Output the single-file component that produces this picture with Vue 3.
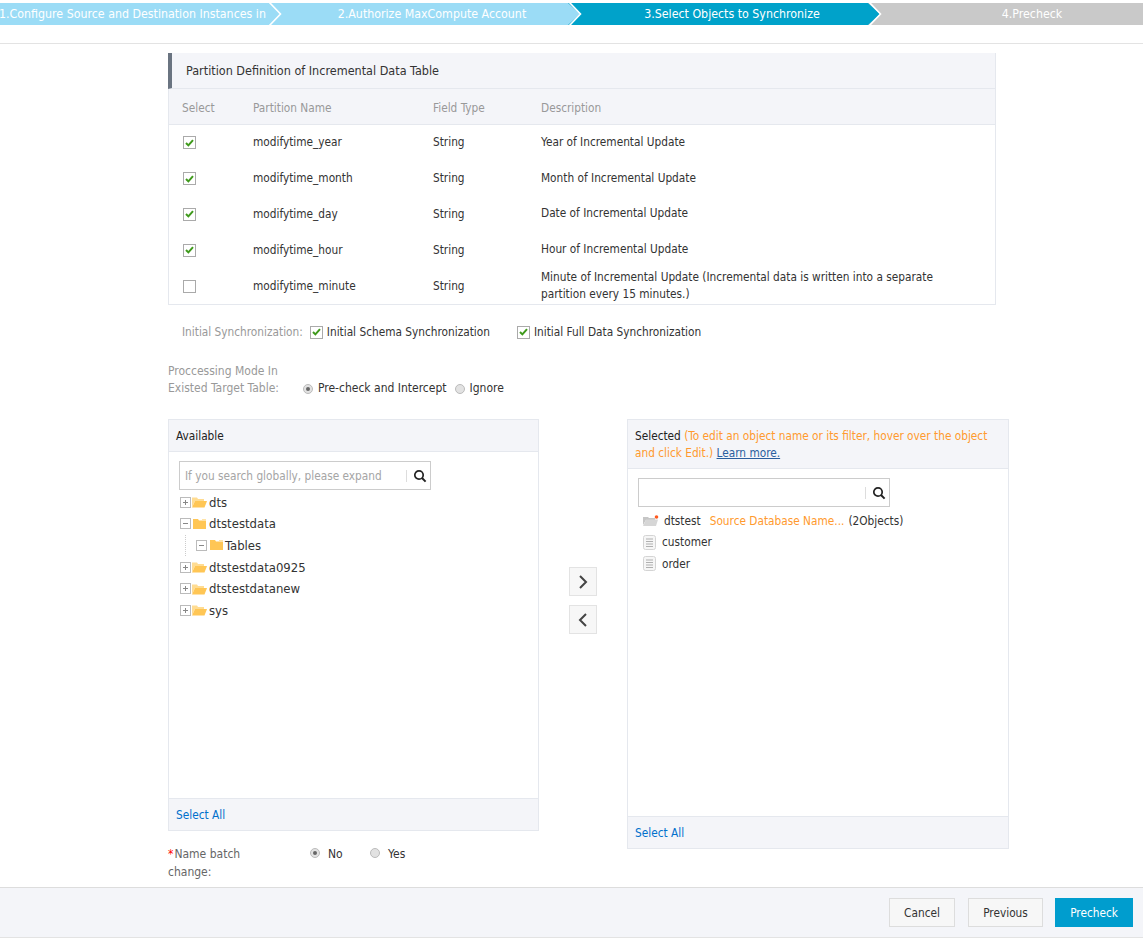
<template>
  <div class="page">
    <div class="stepper-wrap">
      <div class="stepper">
        <div v-for="s in steps" :key="s.label" class="step" :class="s.state">
          <span class="step-text">{{ s.label }}</span>
          <svg class="step-arrow" width="14" height="22" viewBox="0 0 14 22">
            <path d="M0 0 H14 V22 H0 L12 11 Z" :fill="s.next" />
            <path d="M1 -1 L12.5 11 L1 23" fill="none" stroke="#fff" stroke-width="1.6" />
          </svg>
        </div>
      </div>
    </div>

    <div class="content">
      <div class="partition">
        <div class="partition-title">Partition Definition of Incremental Data Table</div>
        <table class="partition-table">
          <thead>
            <tr>
              <th class="col-select">Select</th>
              <th class="col-name">Partition Name</th>
              <th class="col-type">Field Type</th>
              <th>Description</th>
            </tr>
          </thead>
          <tbody>
            <tr v-for="r in rows" :key="r.name">
              <td>
                <span class="checkbox" :class="{ on: r.on }">
                  <svg v-if="r.on" width="9" height="8" viewBox="0 0 9 8"><path d="M1 4 L3.4 6.4 L8 1.2" fill="none" stroke="#3f9a1c" stroke-width="2" /></svg>
                </span>
              </td>
              <td>{{ r.name }}</td>
              <td>String</td>
              <td class="desc">{{ r.desc }}</td>
            </tr>
          </tbody>
        </table>
      </div>

      <div class="init-row">
        <span class="form-label">Initial Synchronization:</span>
        <label class="check-label first">
          <span class="checkbox on"><svg width="9" height="8" viewBox="0 0 9 8"><path d="M1 4 L3.4 6.4 L8 1.2" fill="none" stroke="#3f9a1c" stroke-width="2" /></svg></span>
          Initial Schema Synchronization
        </label>
        <label class="check-label second">
          <span class="checkbox on"><svg width="9" height="8" viewBox="0 0 9 8"><path d="M1 4 L3.4 6.4 L8 1.2" fill="none" stroke="#3f9a1c" stroke-width="2" /></svg></span>
          Initial Full Data Synchronization
        </label>
      </div>

      <div class="mode-row">
        <div class="form-label mode-label">Proccessing Mode In<br />Existed Target Table:</div>
        <div class="mode-options">
          <span class="radio on"></span><span class="mode-text">Pre-check and Intercept</span>
          <span class="radio"></span><span class="mode-text">Ignore</span>
        </div>
      </div>

      <div class="transfer">
        <div class="left-col">
          <div class="panel panel-left">
            <div class="panel-head">Available</div>
            <div class="panel-body">
              <div class="search">
                <span class="search-placeholder">If you search globally, please expand</span>
                <span class="search-sep"></span>
                <svg class="search-icon" width="14" height="14" viewBox="0 0 14 14"><circle cx="6" cy="6" r="4.2" fill="none" stroke="#222" stroke-width="1.7" /><path d="M9 9 L12.6 12.6" stroke="#222" stroke-width="2" /></svg>
              </div>
              <ul class="tree">
                <li v-for="n in tree" :key="n.name" class="tree-row" :class="{ child: n.child }">
                  <span class="toggle">
                    <svg width="11" height="11" viewBox="0 0 11 11"><rect x=".5" y=".5" width="10" height="10" fill="#fff" stroke="#bbb" /><path :d="n.open ? 'M3 5.5 H8' : 'M3 5.5 H8 M5.5 3 V8'" stroke="#888" /></svg>
                  </span>
                  <svg v-if="n.open" class="folder open" width="13" height="12" viewBox="0 0 13 12"><path d="M0 1 H5 L6 2.5 H13 V11 H0 Z" fill="#ffc655" /><path d="M9 1 H13 V2.5 H9 Z" fill="#ffe3a6" /></svg>
                  <svg v-else class="folder" width="15" height="12" viewBox="0 0 15 12"><path d="M0 1.5 H5 L6 3 H12 V5 H3 L0 11 Z" fill="#ffdc92" /><path d="M3 5 H15 L12.5 11.5 H0 Z" fill="#ffc655" /></svg>
                  <span>{{ n.name }}</span>
                </li>
              </ul>
            </div>
            <div class="panel-foot"><a class="link">Select All</a></div>
          </div>

          <div class="batch-row">
            <div class="batch-label"><span class="req">*</span>Name batch<br />change:</div>
            <span class="radio on"></span><span class="batch-text no">No</span>
            <span class="radio"></span><span class="batch-text">Yes</span>
          </div>
        </div>

        <div class="move-btns">
          <button class="move-btn"><svg width="10" height="14" viewBox="0 0 10 14"><path d="M2 1 L8 7 L2 13" fill="none" stroke="#444" stroke-width="2" /></svg></button>
          <button class="move-btn"><svg width="10" height="14" viewBox="0 0 10 14"><path d="M8 1 L2 7 L8 13" fill="none" stroke="#444" stroke-width="2" /></svg></button>
        </div>

        <div class="panel panel-right">
          <div class="panel-head tall">
            Selected <span class="orange">(To edit an object name or its filter, hover over the object and click Edit.)</span> <a class="learn">Learn more.</a>
          </div>
          <div class="panel-body">
            <div class="search">
              <span class="search-placeholder"></span>
              <span class="search-sep"></span>
              <svg class="search-icon" width="14" height="14" viewBox="0 0 14 14"><circle cx="6" cy="6" r="4.2" fill="none" stroke="#222" stroke-width="1.7" /><path d="M9 9 L12.6 12.6" stroke="#222" stroke-width="2" /></svg>
            </div>
            <ul class="tree selected-tree">
              <li class="tree-row db-row">
                <svg class="db-icon" width="16" height="11" viewBox="0 0 16 11"><path d="M0 2 H5 L6 3 H12 V5 H3 L0 10 Z" fill="#c6c6c6" /><path d="M3 4.5 H15 L13 11 H0 Z" fill="#d6d6d6" /><circle cx="13.5" cy="2" r="1.8" fill="#ff5a1f" /></svg>
                <span>dtstest</span>
                <span class="orange db-note">Source Database Name...</span>
                <span>(2Objects)</span>
              </li>
              <li v-for="t in tables" :key="t" class="tree-row table-row">
                <svg class="doc-icon" width="13" height="15" viewBox="0 0 13 15"><rect x=".5" y=".5" width="12" height="14" rx="2" fill="#f6f6f6" stroke="#d4d4d4" /><path d="M3 4 H10 M3 6.5 H10 M3 9 H10 M3 11.5 H10" stroke="#b0b0b0" /></svg>
                <span>{{ t }}</span>
              </li>
            </ul>
          </div>
          <div class="panel-foot"><a class="link">Select All</a></div>
        </div>
      </div>
    </div>

    <div class="footer">
      <button class="btn cancel">Cancel</button>
      <button class="btn previous">Previous</button>
      <button class="btn primary">Precheck</button>
    </div>
  </div>
</template>

<script setup>
const steps = [
  { label: '1.Configure Source and Destination Instances in', state: 'done', next: '#9bdcf6' },
  { label: '2.Authorize MaxCompute Account', state: 'done', next: '#00a2ca' },
  { label: '3.Select Objects to Synchronize', state: 'active', next: '#c9c9c9' },
  { label: '4.Precheck', state: 'todo', next: '#c9c9c9' }
]

const rows = [
  { name: 'modifytime_year', desc: 'Year of Incremental Update', on: true },
  { name: 'modifytime_month', desc: 'Month of Incremental Update', on: true },
  { name: 'modifytime_day', desc: 'Date of Incremental Update', on: true },
  { name: 'modifytime_hour', desc: 'Hour of Incremental Update', on: true },
  { name: 'modifytime_minute', desc: 'Minute of Incremental Update (Incremental data is written into a separate partition every 15 minutes.)', on: false }
]

const tree = [
  { name: 'dts' },
  { name: 'dtstestdata', open: true },
  { name: 'Tables', open: true, child: true },
  { name: 'dtstestdata0925' },
  { name: 'dtstestdatanew' },
  { name: 'sys' }
]

const tables = ['customer', 'order']
</script>

<style>
html, body { margin: 0; background: #fff; }
</style>

<style scoped>
.page { width: 1143px; height: 942px; overflow: hidden; font-family: "DejaVu Sans Condensed", "DejaVu Sans", sans-serif; font-size: 11.75px; color: #333; }

.stepper-wrap { height: 44px; border-bottom: 1px solid #e3e3e3; padding-top: 3px; box-sizing: border-box; overflow: hidden; }
.stepper { display: flex; height: 22px; margin-left: -18px; width: 1200px; }
.step { position: relative; width: 300px; flex-shrink: 0; height: 22px; line-height: 22px; font-size: 12.3px; color: #fff; text-align: center; overflow: hidden; }
.step-text { display: block; white-space: nowrap; }
.step.done { background: #9bdcf6; }
.step.active { background: #00a2ca; }
.step.todo { background: #c9c9c9; }
.step:first-child .step-text { margin-left: 17px; text-align: left; }
.step-arrow { position: absolute; right: 0; top: 0; }

.content { padding: 9px 0 0 168px; }

.partition { width: 828px; box-sizing: border-box; border: 1px solid #e5e8ee; padding-bottom: 1px; }
.partition-title { height: 35px; line-height: 36px; font-size: 12.5px; background: #f4f5f9; border-left: 4px solid #6a7481; padding-left: 14px; margin-left: -1px; margin-top: -1px; border-bottom: 1px solid #e5e8ee; color: #333; }
.partition-table { width: 100%; border-collapse: collapse; table-layout: fixed; }
.partition-table th { height: 35px; box-sizing: border-box; background: #f4f5f9; border-bottom: 1px solid #e5e8ee; font-weight: normal; color: #999; text-align: left; padding: 4px 0 0; }
.partition-table td { height: 35.8px; padding: 0; }
.partition-table th:first-child { padding-left: 13px; }
.partition-table td:first-child { padding-left: 14px; }
.col-select { width: 84px; }
.col-name { width: 180px; }
.col-type { width: 108px; }
.desc { padding-right: 40px !important; line-height: 17px; }

.checkbox { display: inline-flex; align-items: center; justify-content: center; width: 11px; height: 11px; border: 1px solid #aaa; background: #fff; vertical-align: middle; }

.init-row { display: flex; align-items: center; height: 20px; margin-top: 17px; padding-left: 14px; }
.form-label { color: #999; }
.check-label { display: flex; align-items: center; gap: 4px; white-space: nowrap; }
.check-label.first { margin-left: 7px; }
.check-label.second { margin-left: 27px; }

.mode-row { display: flex; align-items: flex-end; margin-top: 21px; font-size: 12px; }
.mode-label { width: 135px; line-height: 17px; }
.mode-options { display: flex; align-items: center; line-height: 17px; }
.mode-text { margin-left: 5px; margin-right: 8px; }

.radio { display: inline-block; position: relative; width: 10px; height: 10px; border-radius: 50%; border: 1px solid #bbb; background: #e2e2e2; box-sizing: border-box; }
.radio.on::after { content: ""; position: absolute; left: 2px; top: 2px; width: 4px; height: 4px; border-radius: 50%; background: #666; }

.transfer { display: flex; align-items: flex-start; margin-top: 22px; }
.left-col { width: 371px; }
.panel { box-sizing: border-box; border: 1px solid #e5e8ee; display: flex; flex-direction: column; }
.panel-left { width: 371px; height: 412px; }
.panel-right { width: 382px; height: 430px; }
.panel-head { height: 32px; line-height: 33px; padding-left: 7px; background: #f4f5f9; border-bottom: 1px solid #e5e8ee; box-sizing: border-box; color: #222; }
.panel-head.tall { height: 49px; line-height: 17px; padding: 8px 10px 0 7px; }
.panel-body { flex: 1; padding: 9px 10px 0; }
.panel-foot { height: 32px; line-height: 32px; padding-left: 7px; background: #f4f5f9; border-top: 1px solid #e5e8ee; box-sizing: border-box; }
.link { color: #0070cc; }
.orange { color: #ff9a2e; }
.learn { color: #2b5f9e; text-decoration: underline; }

.search { display: flex; align-items: center; width: 252px; height: 29px; box-sizing: border-box; border: 1px solid #ccc; padding: 1px 3px 0 5px; background: #fff; }
.search-placeholder { flex: 1; color: #a5a5a5; white-space: nowrap; }
.search-sep { width: 1px; height: 12px; background: #ddd; margin-right: 6px; }

.tree { list-style: none; margin: 1px 0 0; padding: 0; font-size: 13px; }
.tree-row { display: flex; align-items: center; height: 21.6px; color: #333; white-space: nowrap; }
.tree-row.child { padding-left: 16px; background: repeating-linear-gradient(#ccc 0 1px, transparent 1px 2px) 6px 0 / 1px 100% no-repeat; }
.toggle { display: inline-flex; width: 11px; margin-left: 1px; margin-right: 1px; }
.child .toggle { margin-right: 2px; }
.folder { margin-right: 2px; }
.folder.open { margin-left: 1px; margin-right: 3px; }
.child .folder.open { margin-right: 2px; }

.move-btns { display: flex; flex-direction: column; gap: 9px; margin: 148px 30px 0; }
.move-btn { display: flex; align-items: center; justify-content: center; width: 28px; height: 29px; padding: 0; background: #f7f7f7; border: 1px solid #e3e3e3; }

.selected-tree { font-size: 11.75px; margin-top: 3px; }
.db-row { padding-left: 5px; height: 21px; }
.db-icon { margin-right: 5px; }
.db-note { margin: 0 4px 0 9px; }
.table-row { padding-left: 5px; gap: 6px; }

.batch-row { display: flex; align-items: flex-start; height: 41px; margin-top: 14px; line-height: 18px; font-size: 12px; }
.batch-label { width: 142px; color: #666; }
.req { color: #f00; margin-right: 1px; }
.batch-row .radio { margin-top: 3px; }
.batch-text { margin-left: 8px; }
.batch-text.no { width: 42px; }

.footer { display: flex; justify-content: flex-end; align-items: center; height: 51px; box-sizing: border-box; margin-top: 1px; padding-right: 10px; background: #f4f5f9; border-top: 1px solid #ddd; border-bottom: 1px solid #e3e3e3; }
.btn { height: 29px; padding: 0; font: inherit; color: #333; background: #f7f7f7; border: 1px solid #ddd; }
.cancel { width: 66px; }
.previous { width: 75px; margin-left: 13px; }
.btn.primary { width: 78px; margin-left: 12px; background: #009dce; border-color: #009dce; color: #fff; }
</style>
